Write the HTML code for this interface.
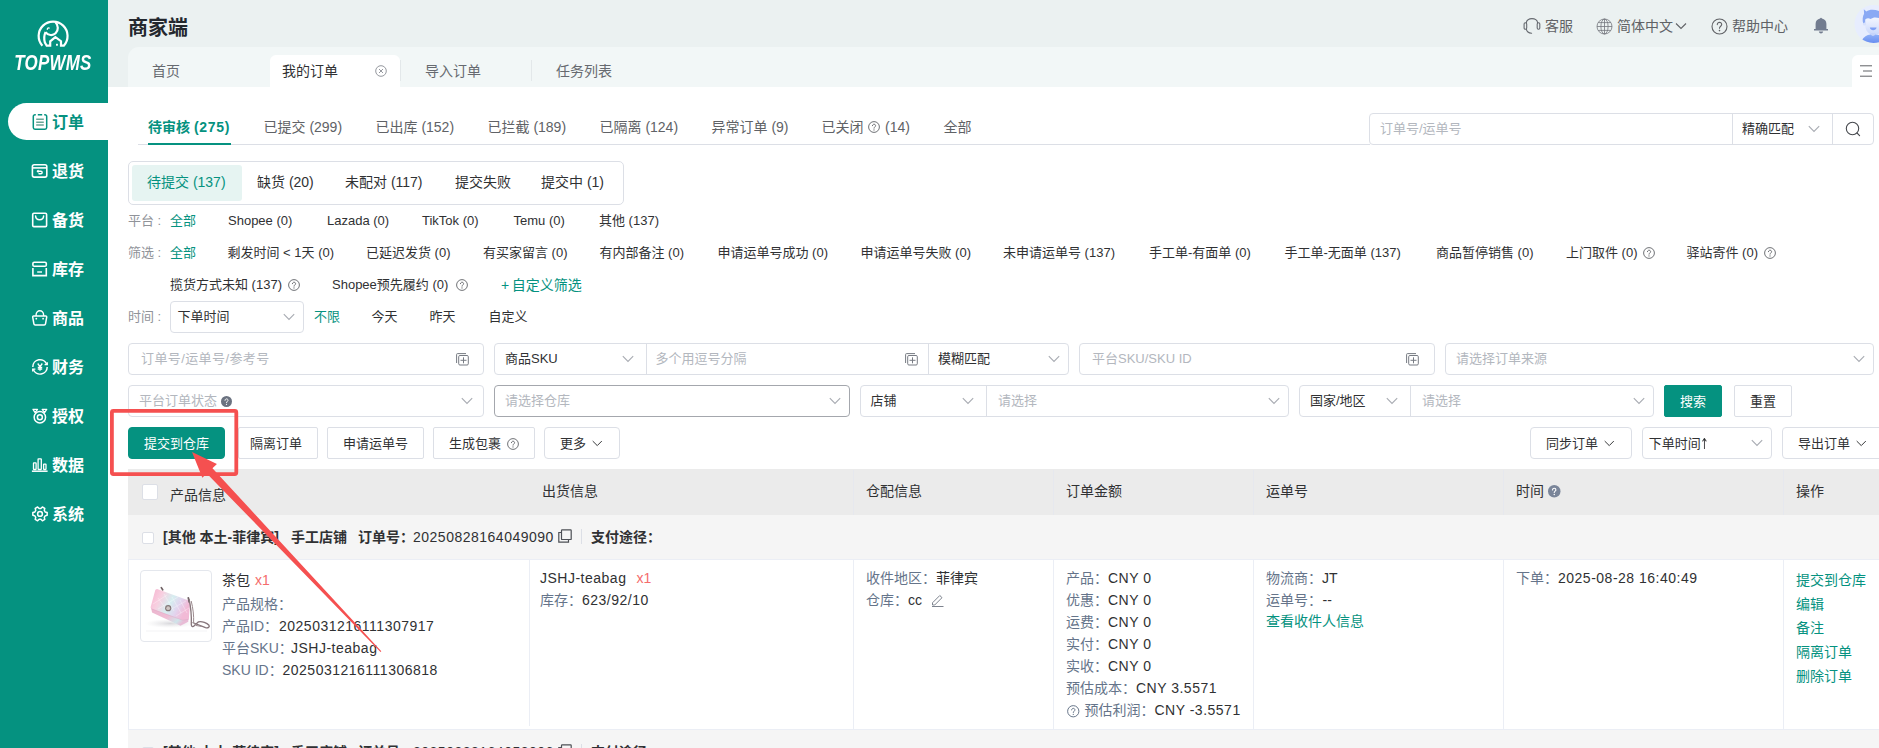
<!DOCTYPE html>
<html lang="zh-CN">
<head>
<meta charset="utf-8">
<title>商家端 - 我的订单</title>
<style>
*{box-sizing:border-box;margin:0;padding:0}
html,body{width:1879px;height:748px;overflow:hidden;background:#fff}
body{position:relative;font-family:"Liberation Sans","Noto Sans CJK SC",sans-serif;font-size:14px;color:#303133;-webkit-font-smoothing:antialiased}
.abs{position:absolute;white-space:nowrap}
.t{position:absolute;white-space:nowrap;height:22px;line-height:22px}
svg{display:block;overflow:visible}
.teal{color:#059280}
.g6{color:#606266}
.lb{color:#65748a}
.red{color:#f56c6c}
.ph{color:#b3b7be}
/* sidebar */
#side{position:absolute;left:0;top:0;width:108px;height:748px;background:#059280}
.mi{position:absolute;left:0;width:108px;height:37px;line-height:37px;color:#fff;font-size:16px;font-weight:700}
.mi span{position:absolute;left:52px;top:0}
.mi svg{position:absolute;left:31.700px;top:10px}
/* header */
#hd{position:absolute;left:108px;top:0;width:1771px;height:47px;background:#ebf1f1}
#tabs{position:absolute;left:108px;top:47px;width:1771px;height:40px;background:#ebf1f1}
#tabs .bar{position:absolute;left:20px;top:0;right:0;height:40px;background:#f2f7f7;border-top-left-radius:11px}
.tab{position:absolute;top:8px;height:32px;line-height:32px;font-size:14px;color:#666a70}
.hitem{position:absolute;top:15px;height:22px;line-height:22px;font-size:14px;color:#606266}
/* inputs */
.box{position:absolute;height:32px;border:1px solid #dcdfe6;background:#fff;border-radius:4px;font-size:13px;line-height:30px}
.box .tx{position:absolute;top:0;white-space:nowrap}
.chev{position:absolute;top:10px}
.btn{position:absolute;height:32px;line-height:30px;border:1px solid #dcdfe6;border-radius:2px;background:#fff;font-size:13px;color:#303133;text-align:left}
.btn.pri{background:#059280;border-color:#059280;color:#fff}
.f13{font-size:13px}
.lbl{color:#909399}
.n{letter-spacing:.5px}
</style>
</head>
<body>
<!-- SIDEBAR -->
<div id="side">
  <svg class="abs" style="left:30px;top:14px" width="48" height="38" viewBox="0 0 48 38" fill="none" stroke="#fff" stroke-width="2.2" stroke-linejoin="miter">
    <path d="M12.4 31.7A14.45 14.45 0 1 1 33.8 31.7H31V27.2L25.4 23.1L20.2 27.3V31.7H16.700L14.900 28.600C14 25.500 14.100 21.200 15.600 18.100"/>
    <path d="M25.500 8.200C28.400 11.200 28.700 16.300 25.600 19.300C22.800 22 18.100 21.600 15.500 18.100"/>
    <path d="M17.300 15.300c.1-1 1-1.600 1.900-1.300" stroke-width="1.300" stroke-linecap="round"/>
    <rect x="26" y="29.800" width="1.900" height="1.900" fill="#fff" stroke="none"/>
  </svg>
  <div class="abs" id="logo" style="left:-1.300px;top:49px;width:108px;height:28px;line-height:28px;text-align:center;color:#fff;font-size:22.5px;font-weight:700;font-style:italic;letter-spacing:.3px;transform:scaleX(.752);transform-origin:53.500px 50%">TOPWMS</div>

  <div class="abs" style="left:8px;top:103px;width:100px;height:37px;background:#fff;border-radius:18.5px 0 0 18.5px"></div>
  <div class="mi" style="top:104px;color:#059280"><svg style="left:31.500px;top:9px" width="16" height="18" viewBox="0 0 16 18" fill="none" stroke="#059280" stroke-width="1.500"><path d="M3.800 1.800H3A1.700 1.700 0 0 0 1.300 3.500V14.500A1.700 1.700 0 0 0 3 16.200H13A1.700 1.700 0 0 0 14.700 14.500V3.500A1.700 1.700 0 0 0 13 1.800H12.200M5.800 1.800H10.200"/><path d="M4.200 6.300h7.600M4.200 9.200h7.600M4.200 12.100h7.600" stroke="#6aa596" stroke-width="1.500"/></svg><span>订单</span></div>
  <div class="mi" style="top:153px"><svg style="left:31px;top:10px" width="17" height="16" viewBox="0 0 17 16" fill="none" stroke="#fff" stroke-width="1.600"><rect x="1.400" y="1.700" width="14.400" height="12.400" rx="1.800"/><path d="M1.400 4.900h14.400"/><path d="M6.600 8.300h3.300c1.700 0 1.700 2.500 0 2.500H8" stroke-linecap="round" stroke-width="1.400"/><path d="M7.300 7.100L5.800 8.300l1.500 1.200z" fill="#fff" stroke-width=".6"/></svg><span>退货</span></div>
  <div class="mi" style="top:202px"><svg style="left:31px;top:10px" width="17" height="16" viewBox="0 0 17 16" fill="none" stroke="#fff" stroke-width="1.600"><rect x="1.700" y="1.200" width="13.900" height="13.400" rx="1.200"/><path d="M4.600 4C4.800 9 12.400 9 12.600 4" stroke-linecap="round" stroke-width="1.500"/></svg><span>备货</span></div>
  <div class="mi" style="top:251px"><svg style="left:31px;top:10px" width="17" height="16" viewBox="0 0 17 16" fill="none" stroke="#fff" stroke-width="1.600"><rect x="1.900" y="1.200" width="13.400" height="4.100" rx="1.300"/><path d="M1.900 7.100V14.600H15.300V7.100"/><path d="M6.200 11h4.800" stroke-width="1.400"/></svg><span>库存</span></div>
  <div class="mi" style="top:300px"><svg style="left:31px;top:8px" width="18" height="18" viewBox="0 0 18 18" fill="none" stroke="#fff" stroke-width="1.500" stroke-linejoin="round"><path d="M2.600 8.100H14.800Q15.900 8.100 15.700 9.200L14.500 15.800Q14.300 16.900 13.200 16.900H4.200Q3.100 16.900 2.900 15.800L1.700 9.200Q1.500 8.100 2.600 8.100Z"/><path d="M5.100 8V7A3.750 4.300 0 0 1 12.600 7V8" stroke-width="1.400"/><circle cx="5.300" cy="10.700" r=".9" fill="#fff" stroke="none"/><circle cx="12.100" cy="10.700" r=".9" fill="#fff" stroke="none"/></svg><span>商品</span></div>
  <div class="mi" style="top:349px"><svg style="left:30.600px;top:9px" width="18" height="18" viewBox="0 0 18 18" fill="none" stroke="#fff" stroke-width="1.500"><path d="M1.800 8.900A7.200 7.200 0 0 1 15.770 6.440"/><path d="M13.600 6.600H16.300V4.200" stroke-width="1.300"/><path d="M16.200 8.900A7.200 7.200 0 0 1 2.230 11.360"/><path d="M4.400 11.200H1.700V13.600" stroke-width="1.300"/><path d="M6.700 5.500L9 8.700 11.300 5.500M9 8.700V12.800M6.800 9.300h4.400M6.800 11h4.400" stroke-width="1.300"/></svg><span>财务</span></div>
  <div class="mi" style="top:398px"><svg style="left:31px;top:10px" width="18" height="16" viewBox="0 0 18 16" fill="none" stroke="#fff" stroke-width="1.500" stroke-linejoin="round"><circle cx="8.850" cy="9.200" r="5.700"/><circle cx="8.850" cy="9.200" r="2.500"/><path d="M2 1.400H6.500L4.100 4.600ZM15.700 1.400H11.200L13.600 4.600Z" stroke-width="1.300"/></svg><span>授权</span></div>
  <div class="mi" style="top:447px"><svg style="left:31px;top:10px" width="18" height="16" viewBox="0 0 18 16" fill="none" stroke="#fff" stroke-width="1.300"><path d="M.9 14.200h15.700" stroke-width="1.500"/><rect x="2.500" y="5.900" width="2.600" height="6.600" rx=".4"/><rect x="7.100" y="1.900" width="3.200" height="10.600" rx=".4"/><rect x="12.600" y="7.100" width="2.400" height="5.400" rx=".4"/></svg><span>数据</span></div>
  <div class="mi" style="top:496px"><svg style="left:30.700px;top:9px" width="18" height="18" viewBox="0 0 18 18" fill="none" stroke="#fff" stroke-width="1.500" stroke-linejoin="round"><path d="M14.13 6.93L16.17 7.51L16.17 10.29L14.13 10.87L13.27 12.36L13.79 14.41L11.38 15.80L9.86 14.33L8.14 14.33L6.62 15.80L4.21 14.41L4.73 12.36L3.87 10.87L1.83 10.29L1.83 7.51L3.87 6.93L4.73 5.44L4.21 3.39L6.62 2.00L8.14 3.47L9.86 3.47L11.38 2.00L13.79 3.39L13.27 5.44Z"/><circle cx="9" cy="8.900" r="2.400"/></svg><span>系统</span></div>
</div>

<!-- HEADER -->
<div id="hd">
  <div class="abs" style="left:20px;top:13px;height:30px;line-height:30px;font-size:20px;font-weight:700;color:#24282e">商家端</div>
  <!-- 客服 -->
  <svg class="abs" style="left:1415px;top:17px" width="18" height="18" viewBox="0 0 18 18" fill="none" stroke="#666a70" stroke-width="1.100" stroke-linecap="round"><path d="M3.300 6C3.300.2 14.600.2 14.600 6"/><rect x="1.100" y="5.800" width="2.600" height="6.400" rx="1.200"/><rect x="14.200" y="5.800" width="2.600" height="6.400" rx="1.200"/><path d="M3.300 12.200C3.700 14.600 5.600 16.100 8.600 16.300"/></svg>
  <div class="hitem" style="left:1437px">客服</div>
  <!-- globe -->
  <svg class="abs" style="left:1488px;top:18px" width="17" height="17" viewBox="0 0 17 17" fill="none" stroke="#73767d" stroke-width=".8"><circle cx="8.500" cy="8.500" r="7.500"/><ellipse cx="8.500" cy="8.500" rx="3.600" ry="7.500"/><path d="M8.500 1v15M1 8.500h15M2.200 4.600h12.600M2.200 12.400h12.600"/></svg>
  <div class="hitem" style="left:1509px">简体中文</div>
  <svg class="abs" style="left:1567px;top:22px" width="12" height="8" viewBox="0 0 12 8" fill="none" stroke="#606266" stroke-width="1.100"><path d="M1 1.500l5 5 5-5"/></svg>
  <!-- help -->
  <svg class="abs" style="left:1603px;top:18px" width="17" height="17" viewBox="0 0 17 17" fill="none" stroke="#606266" stroke-width="1.100"><circle cx="8.500" cy="8.500" r="7.500"/><path d="M6.300 6.600c0-3 4.500-2.900 4.400 0 0 1.600-2.200 1.700-2.200 3.600" stroke-linecap="round"/><circle cx="8.500" cy="12.600" r=".8" fill="#606266" stroke="none"/></svg>
  <div class="hitem" style="left:1624px">帮助中心</div>
  <!-- bell -->
  <svg class="abs" style="left:1705px;top:17px" width="16" height="18" viewBox="0 0 16 18" fill="#727c8f"><path d="M8 .8c.5 0 .8.300.9.800 2.700.500 4.500 2.500 4.500 5.200v5.200h1.600v1.500H1V12h1.600V6.800c0-2.700 1.800-4.700 4.500-5.200.1-.5.400-.8.900-.8z"/><path d="M5.800 14.600h4.400c-.3 1.300-1.100 2-2.200 2s-1.900-.7-2.200-2z"/></svg>
  <!-- avatar -->
  <svg class="abs" style="left:1746px;top:5px;overflow:hidden" width="25" height="40" viewBox="0 0 25 40"><defs><linearGradient id="bd" x1="0" y1="0" x2="0" y2="1"><stop offset="0" stop-color="#8fb0f8"/><stop offset="1" stop-color="#5f86ee"/></linearGradient><linearGradient id="fc" x1="0" y1="0" x2="0" y2="1"><stop offset="0" stop-color="#f3f6ff"/><stop offset="1" stop-color="#c9d7fb"/></linearGradient></defs><clipPath id="avc"><circle cx="19.500" cy="19" r="19"/></clipPath><circle cx="19.500" cy="19" r="19" fill="#e7edfe"/><g clip-path="url(#avc)"><path d="M9.300 19c-1.200-4-.6-8 .8-10.200l-.3-4.600 2.600 2.200C15 4.600 20 4.200 25 6v13z" fill="#8aa9f4"/><path d="M11.200 14.500c2-1.500 3.600-1.600 5.300-.4 2.500-2 5.500-2 8.500-1v15.400c-1.500 1-3 1.400-5 1.400-5 0-8.800-4.400-8.800-10z" fill="url(#fc)"/><circle cx="10.500" cy="19" r="1.600" fill="#d7e1fc"/><path d="M15.800 22.500h6.800c-.4 1.700-1.700 2.700-3.400 2.700s-3-1-3.400-2.700z" fill="#7ea0f5"/><path d="M16.600 28h4.800v4.500h-4.800z" fill="#c6d4fa"/><path d="M7.800 35.200c2-3.300 5-5.300 8.800-5.600 1.500 1.800 3.300 1.800 4.800 0L25 30v10H10z" fill="url(#bd)"/></g></svg>
</div>
<div id="tabs"><div class="bar"></div>
  <div class="tab" style="left:44px">首页</div>
  <div class="abs" style="left:162px;top:8px;width:130px;height:32px;background:#fff;border-radius:6px 6px 0 0"></div>
  <div class="tab" style="left:174px;color:#303133">我的订单</div>
  <svg class="abs" style="left:267px;top:18px" width="12" height="12" viewBox="0 0 12 12" fill="none" stroke="#96999f" stroke-width="1"><circle cx="6" cy="6" r="5.300"/><path d="M4 4l4 4M8 4l-4 4"/></svg>
  <div class="abs" style="left:292px;top:13px;width:1px;height:21px;background:#e3e8ea"></div>
  <div class="tab" style="left:317px">导入订单</div>
  <div class="abs" style="left:423px;top:13px;width:1px;height:21px;background:#e3e8ea"></div>
  <div class="tab" style="left:448px">任务列表</div>
  <div class="abs" style="left:1744px;top:8px;width:27px;height:32px;background:#fff;border-radius:6px 0 0 0"></div>
  <svg class="abs" style="left:1752px;top:18px" width="12" height="12" viewBox="0 0 12 12" fill="none" stroke="#606266" stroke-width="1"><path d="M0 .8h12M3 6h9M0 11.200h12"/></svg>
</div>

<div id="content">
<!-- main tabs -->
<div class="abs" style="left:138px;top:144px;width:1232px;height:1px;background:#dcdfe6"></div>
<div class="abs" style="left:148px;top:143px;width:83px;height:2px;background:#059280"></div>
<div class="t teal" style="left:148px;top:116px;font-weight:700">待审核 <span style="letter-spacing:.7px">(275)</span></div>
<div class="t g6" style="left:263.500px;top:116px">已提交 (299)</div>
<div class="t g6" style="left:375.500px;top:116px">已出库 (152)</div>
<div class="t g6" style="left:487.500px;top:116px">已拦截 (189)</div>
<div class="t g6" style="left:599.500px;top:116px">已隔离 (124)</div>
<div class="t g6" style="left:711.500px;top:116px">异常订单 (9)</div>
<div class="t g6" style="left:821.500px;top:116px">已关闭</div>
<svg class="abs" style="left:867.500px;top:121px" width="12" height="12" viewBox="0 0 12 12" fill="none" stroke="#606266" stroke-width=".9"><circle cx="6" cy="6" r="5.400"/><path d="M4.400 4.700c0-2.100 3.200-2 3.200 0 0 1.100-1.600 1.300-1.600 2.500" stroke-linecap="round"/><circle cx="6" cy="8.900" r=".6" fill="#606266" stroke="none"/></svg>
<div class="t g6" style="left:885px;top:116px">(14)</div>
<div class="t g6" style="left:943.500px;top:116px">全部</div>
<!-- search box top right -->
<div class="box" style="left:1369px;top:113px;width:505px;border-radius:4px"></div>
<div class="abs" style="left:1732px;top:114px;width:1px;height:30px;background:#dcdfe6"></div>
<div class="abs" style="left:1832px;top:114px;width:1px;height:30px;background:#dcdfe6"></div>
<div class="t ph f13" style="left:1380px;top:118px">订单号/运单号</div>
<div class="t f13" style="left:1742px;top:118px">精确匹配</div>
<svg class="abs" style="left:1808px;top:125px" width="12" height="8" viewBox="0 0 12 8" fill="none" stroke="#a8abb2" stroke-width="1.100"><path d="M.8 1.200l5.200 5.200 5.200-5.200"/></svg>
<svg class="abs" style="left:1845px;top:121px" width="16" height="16" viewBox="0 0 16 16" fill="none" stroke="#45484d" stroke-width="1.100" stroke-linecap="round"><circle cx="7.500" cy="7.500" r="6.200"/><path d="M12 12l2.600 2.600"/></svg>
<!-- secondary tabs -->
<div class="abs" style="left:128px;top:161px;width:496px;height:43.500px;border:1px solid #dcdfe6;border-radius:5px"></div>
<div class="abs" style="left:132px;top:165px;width:110px;height:35.700px;background:#e6f4f2;border-radius:3px"></div>
<div class="t teal" style="left:147px;top:171px">待提交 (137)</div>
<div class="t " style="left:257px;top:171px">缺货 (20)</div>
<div class="t " style="left:345px;top:171px">未配对 (117)</div>
<div class="t " style="left:455px;top:171px">提交失败</div>
<div class="t " style="left:541px;top:171px">提交中 (1)</div>
<div class="t f13 lbl" style="left:128px;top:210px">平台<span style="margin-left:3.500px">:</span></div>
<div class="t f13 teal" style="left:170px;top:210px">全部</div>
<div class="t f13" style="left:228px;top:210px">Shopee (0)</div>
<div class="t f13" style="left:327px;top:210px">Lazada (0)</div>
<div class="t f13" style="left:422px;top:210px">TikTok (0)</div>
<div class="t f13" style="left:513.5px;top:210px">Temu (0)</div>
<div class="t f13" style="left:599px;top:210px">其他 (137)</div>
<div class="t f13 lbl" style="left:128px;top:242px">筛选<span style="margin-left:3.500px">:</span></div>
<div class="t f13 teal" style="left:170px;top:242px">全部</div>
<div class="t f13" style="left:227.5px;top:242px">剩发时间 &lt; 1天 (0)</div>
<div class="t f13" style="left:366px;top:242px">已延迟发货 (0)</div>
<div class="t f13" style="left:483px;top:242px">有买家留言 (0)</div>
<div class="t f13" style="left:599.5px;top:242px">有内部备注 (0)</div>
<div class="t f13" style="left:717.5px;top:242px">申请运单号成功 (0)</div>
<div class="t f13" style="left:860.5px;top:242px">申请运单号失败 (0)</div>
<div class="t f13" style="left:1003px;top:242px">未申请运单号 (137)</div>
<div class="t f13" style="left:1149px;top:242px">手工单-有面单 (0)</div>
<div class="t f13" style="left:1284.5px;top:242px">手工单-无面单 (137)</div>
<div class="t f13" style="left:1436px;top:242px">商品暂停销售 (0)</div>
<div class="t f13" style="left:1566px;top:242px">上门取件 (0)</div>
<div class="t f13" style="left:1686.5px;top:242px">驿站寄件 (0)</div>
<svg class="abs" style="left:1643px;top:247px" width="12" height="12" viewBox="0 0 12 12" fill="none" stroke="#606266" stroke-width=".9"><circle cx="6" cy="6" r="5.400"/><path d="M4.400 4.700c0-2.100 3.200-2 3.200 0 0 1.100-1.600 1.300-1.600 2.500" stroke-linecap="round"/><circle cx="6" cy="8.900" r=".6" fill="#606266" stroke="none"/></svg>
<svg class="abs" style="left:1763.5px;top:247px" width="12" height="12" viewBox="0 0 12 12" fill="none" stroke="#606266" stroke-width=".9"><circle cx="6" cy="6" r="5.400"/><path d="M4.400 4.700c0-2.100 3.200-2 3.200 0 0 1.100-1.600 1.300-1.600 2.500" stroke-linecap="round"/><circle cx="6" cy="8.900" r=".6" fill="#606266" stroke="none"/></svg>
<div class="t f13" style="left:170px;top:274px">揽货方式未知 (137)</div>
<svg class="abs" style="left:288px;top:279px" width="12" height="12" viewBox="0 0 12 12" fill="none" stroke="#606266" stroke-width=".9"><circle cx="6" cy="6" r="5.400"/><path d="M4.400 4.700c0-2.100 3.200-2 3.200 0 0 1.100-1.600 1.300-1.600 2.500" stroke-linecap="round"/><circle cx="6" cy="8.900" r=".6" fill="#606266" stroke="none"/></svg>
<div class="t f13" style="left:332px;top:274px">Shopee预先履约 (0)</div>
<svg class="abs" style="left:455.5px;top:279px" width="12" height="12" viewBox="0 0 12 12" fill="none" stroke="#606266" stroke-width=".9"><circle cx="6" cy="6" r="5.400"/><path d="M4.400 4.700c0-2.100 3.200-2 3.200 0 0 1.100-1.600 1.300-1.600 2.500" stroke-linecap="round"/><circle cx="6" cy="8.900" r=".6" fill="#606266" stroke="none"/></svg>
<div class="t teal" style="left:501px;top:274px">+<span style="margin-left:2.500px">自定义筛选</span></div>
<div class="t f13 lbl" style="left:128px;top:306px">时间<span style="margin-left:3.500px">:</span></div>
<div class="box" style="left:170px;top:301px;width:134px"></div>
<div class="t f13" style="left:177.5px;top:306px">下单时间</div>
<svg class="abs" style="left:283px;top:313px" width="12" height="8" viewBox="0 0 12 8" fill="none" stroke="#a8abb2" stroke-width="1.100"><path d="M.8 1.200l5.200 5.200 5.200-5.200"/></svg>
<div class="t f13 teal" style="left:314px;top:306px">不限</div>
<div class="t f13" style="left:371.5px;top:306px">今天</div>
<div class="t f13" style="left:429.5px;top:306px">昨天</div>
<div class="t f13" style="left:488.5px;top:306px">自定义</div>
<!-- search row 1 -->
<div class="box" style="left:128px;top:343px;width:356px;"></div>
<div class="t f13 ph" style="left:141px;top:348px" ><span style="letter-spacing:.4px">订单号/运单号/参考号</span></div>
<svg class="abs" style="left:455.5px;top:352.800px" width="13" height="13" viewBox="0 0 13 13" fill="none" stroke="#777b83" stroke-width="1"><path d="M.6 10V1.500Q.6.600 1.500.600H10"/><rect x="2.700" y="2.500" width="9.600" height="9.500" rx="1.200" fill="#fff"/><path d="M7.500 4.300v6M4.500 7.300h6"/></svg>
<div class="box" style="left:494px;top:343px;width:575px;"></div>
<div class="abs" style="left:646px;top:344px;width:1px;height:30px;background:#dcdfe6"></div>
<div class="t f13" style="left:505px;top:348px">商品SKU</div>
<svg class="abs" style="left:622px;top:355px" width="12" height="8" viewBox="0 0 12 8" fill="none" stroke="#a8abb2" stroke-width="1.100"><path d="M.8 1.200l5.200 5.200 5.200-5.200"/></svg>
<div class="t f13 ph" style="left:655.5px;top:348px">多个用逗号分隔</div>
<svg class="abs" style="left:904.5px;top:352.800px" width="13" height="13" viewBox="0 0 13 13" fill="none" stroke="#777b83" stroke-width="1"><path d="M.6 10V1.500Q.6.600 1.500.600H10"/><rect x="2.700" y="2.500" width="9.600" height="9.500" rx="1.200" fill="#fff"/><path d="M7.500 4.300v6M4.500 7.300h6"/></svg>
<div class="abs" style="left:927.500px;top:344px;width:1px;height:30px;background:#dcdfe6"></div>
<div class="t f13" style="left:938px;top:348px">模糊匹配</div>
<svg class="abs" style="left:1048px;top:355px" width="12" height="8" viewBox="0 0 12 8" fill="none" stroke="#a8abb2" stroke-width="1.100"><path d="M.8 1.200l5.200 5.200 5.200-5.200"/></svg>
<div class="box" style="left:1079px;top:343px;width:356px;"></div>
<div class="t f13 ph" style="left:1092px;top:348px">平台SKU/SKU ID</div>
<svg class="abs" style="left:1406px;top:352.800px" width="13" height="13" viewBox="0 0 13 13" fill="none" stroke="#777b83" stroke-width="1"><path d="M.6 10V1.500Q.6.600 1.500.600H10"/><rect x="2.700" y="2.500" width="9.600" height="9.500" rx="1.200" fill="#fff"/><path d="M7.500 4.300v6M4.500 7.300h6"/></svg>
<div class="box" style="left:1445px;top:343px;width:429px;"></div>
<div class="t f13 ph" style="left:1456px;top:348px">请选择订单来源</div>
<svg class="abs" style="left:1853px;top:355px" width="12" height="8" viewBox="0 0 12 8" fill="none" stroke="#a8abb2" stroke-width="1.100"><path d="M.8 1.200l5.200 5.200 5.200-5.200"/></svg>
<!-- search row 2 -->
<div class="box" style="left:128px;top:385px;width:356px;"></div>
<div class="t f13 ph" style="left:139px;top:390px">平台订单状态</div>
<svg class="abs" style="left:221px;top:396px" width="11" height="11" viewBox="0 0 11 11"><circle cx="5.500" cy="5.500" r="5.500" fill="#6b7280"/><path d="M4 4.300c0-2 3-1.900 3 0 0 1-1.500 1.200-1.500 2.300" fill="none" stroke="#fff" stroke-width="1" stroke-linecap="round"/><circle cx="5.500" cy="8.300" r=".65" fill="#fff"/></svg>
<svg class="abs" style="left:461px;top:397px" width="12" height="8" viewBox="0 0 12 8" fill="none" stroke="#a8abb2" stroke-width="1.100"><path d="M.8 1.200l5.200 5.200 5.200-5.200"/></svg>
<div class="box" style="left:494px;top:385px;width:356px;border-color:#a4a7ad"></div>
<div class="t f13 ph" style="left:505px;top:390px">请选择仓库</div>
<svg class="abs" style="left:829px;top:397px" width="12" height="8" viewBox="0 0 12 8" fill="none" stroke="#a8abb2" stroke-width="1.100"><path d="M.8 1.200l5.200 5.200 5.200-5.200"/></svg>
<div class="box" style="left:860px;top:385px;width:428.5px;"></div>
<div class="abs" style="left:986px;top:386px;width:1px;height:30px;background:#dcdfe6"></div>
<div class="t f13" style="left:870.5px;top:390px">店铺</div>
<svg class="abs" style="left:962px;top:397px" width="12" height="8" viewBox="0 0 12 8" fill="none" stroke="#a8abb2" stroke-width="1.100"><path d="M.8 1.200l5.200 5.200 5.200-5.200"/></svg>
<div class="t f13 ph" style="left:998px;top:390px">请选择</div>
<svg class="abs" style="left:1268px;top:397px" width="12" height="8" viewBox="0 0 12 8" fill="none" stroke="#a8abb2" stroke-width="1.100"><path d="M.8 1.200l5.200 5.200 5.200-5.200"/></svg>
<div class="box" style="left:1299px;top:385px;width:355px;"></div>
<div class="abs" style="left:1409.500px;top:386px;width:1px;height:30px;background:#dcdfe6"></div>
<div class="t f13" style="left:1310px;top:390px">国家/地区</div>
<svg class="abs" style="left:1386px;top:397px" width="12" height="8" viewBox="0 0 12 8" fill="none" stroke="#a8abb2" stroke-width="1.100"><path d="M.8 1.200l5.200 5.200 5.200-5.200"/></svg>
<div class="t f13 ph" style="left:1422px;top:390px">请选择</div>
<svg class="abs" style="left:1633px;top:397px" width="12" height="8" viewBox="0 0 12 8" fill="none" stroke="#a8abb2" stroke-width="1.100"><path d="M.8 1.200l5.200 5.200 5.200-5.200"/></svg>
<div class="btn pri" style="left:1664px;top:385px;width:58px"></div>
<div class="t f13" style="left:1680px;top:391px;color:#fff">搜索</div>
<div class="btn" style="left:1734px;top:385px;width:58px"></div>
<div class="t f13" style="left:1750px;top:391px">重置</div>
<!-- action row -->
<div class="btn pri" style="left:128px;top:427px;width:96.500px;border-radius:4px"></div>
<div class="t f13" style="left:144px;top:432.5px;color:#fff">提交到仓库</div>
<div class="btn" style="left:237.500px;top:427px;width:80px"></div>
<div class="t f13" style="left:250px;top:432.5px">隔离订单</div>
<div class="btn" style="left:327px;top:427px;width:96.500px"></div>
<div class="t f13" style="left:343px;top:432.5px">申请运单号</div>
<div class="btn" style="left:433px;top:427px;width:101.500px"></div>
<div class="t f13" style="left:449px;top:432.5px">生成包裹</div>
<svg class="abs" style="left:506.500px;top:437.500px" width="12" height="12" viewBox="0 0 12 12" fill="none" stroke="#606266" stroke-width=".9"><circle cx="6" cy="6" r="5.400"/><path d="M4.400 4.700c0-2.100 3.200-2 3.200 0 0 1.100-1.600 1.300-1.600 2.500" stroke-linecap="round"/><circle cx="6" cy="8.900" r=".6" fill="#606266" stroke="none"/></svg>
<div class="btn" style="left:544px;top:427px;width:75.500px;border-radius:4px"></div>
<div class="t f13" style="left:560px;top:432.5px">更多</div>
<svg class="abs" style="left:592px;top:440px" width="10.500" height="7" viewBox="0 0 12 8" fill="none" stroke="#303133" stroke-width="1.100"><path d="M.8 1.200l5.200 5.200 5.200-5.200"/></svg>
<div class="btn" style="left:1530px;top:427px;width:101.500px;border-radius:4px"></div>
<div class="t f13" style="left:1546px;top:432.5px">同步订单</div>
<svg class="abs" style="left:1604px;top:440px" width="10.500" height="7" viewBox="0 0 12 8" fill="none" stroke="#303133" stroke-width="1.100"><path d="M.8 1.200l5.200 5.200 5.200-5.200"/></svg>
<div class="box" style="left:1642px;top:427px;width:129.5px;"></div>
<div class="t f13" style="left:1648.8px;top:432.0px">下单时间<span style="font-family:'DejaVu Sans',sans-serif;font-size:15px;margin-left:-1px;position:relative;top:.7px;display:inline-block;transform:scaleX(.7);transform-origin:0 50%">↑</span></div>
<svg class="abs" style="left:1751px;top:439px" width="12" height="8" viewBox="0 0 12 8" fill="none" stroke="#a8abb2" stroke-width="1.100"><path d="M.8 1.200l5.200 5.200 5.200-5.200"/></svg>
<div class="btn" style="left:1782px;top:427px;width:110px;border-radius:4px"></div>
<div class="t f13" style="left:1798px;top:432.5px">导出订单</div>
<svg class="abs" style="left:1856px;top:440px" width="10.500" height="7" viewBox="0 0 12 8" fill="none" stroke="#303133" stroke-width="1.100"><path d="M.8 1.200l5.200 5.200 5.200-5.200"/></svg>
<!-- table -->
<div class="abs" style="left:128px;top:469.200px;width:1751px;height:46px;background:#ebebeb"></div>
<div class="abs" style="left:853px;top:469.500px;width:1px;height:45px;background:#e6e8ee"></div>
<div class="abs" style="left:1053px;top:469.500px;width:1px;height:45px;background:#e6e8ee"></div>
<div class="abs" style="left:1253px;top:469.500px;width:1px;height:45px;background:#e6e8ee"></div>
<div class="abs" style="left:1503px;top:469.500px;width:1px;height:45px;background:#e6e8ee"></div>
<div class="abs" style="left:1783px;top:469.500px;width:1px;height:45px;background:#e6e8ee"></div>
<div class="abs" style="left:142px;top:484px;width:16px;height:16px;background:#fff;border:1px solid #dcdfe6;border-radius:2px"></div>
<div class="t " style="left:170px;top:484px">产品信息</div>
<div class="t " style="left:542px;top:479.5px">出货信息</div>
<div class="t " style="left:866px;top:479.5px">仓配信息</div>
<div class="t " style="left:1066px;top:479.5px">订单金额</div>
<div class="t " style="left:1266px;top:479.5px">运单号</div>
<div class="t " style="left:1516px;top:479.5px">时间</div>
<div class="t " style="left:1796px;top:479.5px">操作</div>
<svg class="abs" style="left:1548px;top:484.600px" width="12.500" height="12.500" viewBox="0 0 12 12"><circle cx="6" cy="6" r="6" fill="#7a8599"/><path d="M4.400 4.700c0-2.100 3.200-2 3.200 0 0 1.100-1.600 1.300-1.600 2.500" fill="none" stroke="#fff" stroke-width="1.100" stroke-linecap="round"/><circle cx="6" cy="9.100" r=".7" fill="#fff"/></svg>
<div class="abs" style="left:128px;top:514.500px;width:1751px;height:45px;background:#f5f5f5"></div>
<div class="abs" style="left:141.500px;top:531.500px;width:12.500px;height:12.500px;background:#fff;border:1px solid #dcdfe6;border-radius:2px"></div>
<div class="t " style="left:163px;top:525.5px;font-weight:700">[其他 本土-菲律宾]</div>
<div class="t " style="left:291px;top:525.5px;font-weight:700">手工店铺</div>
<div class="t " style="left:358px;top:525.5px;font-weight:700">订单号：</div>
<div class="t n" style="left:413px;top:525.5px">20250828164049090</div>
<svg class="abs" style="left:558px;top:528.500px" width="14" height="14" viewBox="0 0 14 14" fill="none" stroke="#4d5056" stroke-width="1.200"><rect x="3.500" y=".8" width="9.700" height="9.700" rx=".6"/><path d="M3.500 3.500H.8v9.700h9.700v-2.700"/></svg>
<div class="abs" style="left:581px;top:529px;width:1px;height:15px;background:#dcdfe6"></div>
<div class="t " style="left:591px;top:525.5px;font-weight:700">支付途径：</div>
<div class="abs" style="left:128px;top:559px;width:1751px;height:170.500px;background:#fff;border-left:1px solid #ebeef5;border-bottom:1px solid #ebeef5;border-top:1px solid #ebeef5"></div>
<div class="abs" style="left:529px;top:559.500px;width:1px;height:166px;background:#ebeef5"></div>
<div class="abs" style="left:853px;top:559.500px;width:1px;height:170px;background:#ebeef5"></div>
<div class="abs" style="left:1053px;top:559.500px;width:1px;height:170px;background:#ebeef5"></div>
<div class="abs" style="left:1253px;top:559.500px;width:1px;height:170px;background:#ebeef5"></div>
<div class="abs" style="left:1503px;top:559.500px;width:1px;height:170px;background:#ebeef5"></div>
<div class="abs" style="left:1783px;top:559.500px;width:1px;height:170px;background:#ebeef5"></div>
<div class="abs" style="left:140px;top:570px;width:71.500px;height:71.500px;border:1px solid #e4e7ed;border-radius:4px;background:#fff"></div>
<svg class="abs" style="left:136px;top:566px" width="80" height="80" viewBox="0 0 80 80">
<defs>
<linearGradient id="bg1" x1="0" y1="0" x2="1" y2=".4"><stop offset="0" stop-color="#f6b3cf"/><stop offset=".3" stop-color="#f8cfe0"/><stop offset=".58" stop-color="#d6eef0"/><stop offset=".8" stop-color="#e2d4ee"/><stop offset="1" stop-color="#f2bad6"/></linearGradient>
<linearGradient id="bg2" x1="0" y1="0" x2="1" y2=".5"><stop offset="0" stop-color="#eab5cd"/><stop offset=".55" stop-color="#f0bdd5"/><stop offset=".85" stop-color="#cfe5ea"/><stop offset="1" stop-color="#e9bcd6"/></linearGradient>
<radialGradient id="sh" cx=".5" cy=".5" r=".5"><stop offset="0" stop-color="#d4d4d8" stop-opacity=".9"/><stop offset="1" stop-color="#e8e8ea" stop-opacity="0"/></radialGradient>
<filter id="bl" x="-10%" y="-10%" width="120%" height="120%"><feGaussianBlur stdDeviation=".5"/></filter>
</defs>
<ellipse cx="34" cy="57.500" rx="25" ry="4.500" fill="url(#sh)"/>
<path d="M10 65h61" stroke="#f0f0f2" stroke-width=".8"/>
<g filter="url(#bl)">
<path d="M15 41L16 46.500 44.500 59.800 52.300 55.800 53 44z" fill="url(#bg2)"/>
<path d="M19.300 24.100Q20.500 22.600 22.500 23.400L52.800 34.600Q54.300 35.400 54 37.200L52.800 53.200 46.500 54 15.200 42.600Q14.300 41.800 14.800 40.500z" fill="url(#bg1)"/>
<path d="M22 32l8 11M28 28l10 17M36 31l9 16M44 34l7 13M17 38l14-9M22 43l20-12M30 46l20-11M40 50l13-8" stroke="#fff" stroke-opacity=".4" stroke-width=".8" fill="none"/>
<path d="M15.300 42.800L46.500 54.200 52.800 53.300" stroke="#dba4c0" stroke-opacity=".6" stroke-width=".7" fill="none"/>
<circle cx="32.200" cy="42.200" r="3.100" fill="#857778"/><circle cx="32.200" cy="42.200" r="1.900" fill="#cfc6c3"/>
<path d="M25.300 21.600l1.400 2.200M52.300 31.800L53.200 36" stroke="#6f6064" stroke-width="1.700" stroke-linecap="round"/>
<path d="M53 33C54.600 40 55.600 50 55.300 58.500C55.300 61 57 61 58.500 59.500L62.500 55.800C66 55 71 57 73 59.200C74 61.200 72 62.200 69.500 61.600L56.500 56.500" stroke="#86757a" stroke-width="1.300" fill="none" stroke-linejoin="round"/>
<path d="M55.200 35C57 42 58 50 57.600 56.500L60 59.500 66 60.500" stroke="#9b8a8e" stroke-width="1" fill="none"/>
</g>
</svg>
<div class="t " style="left:222px;top:569.2px">茶包</div>
<div class="t red" style="left:255px;top:569.2px">x1</div>
<div class="t lb" style="left:222px;top:593.2px">产品规格：</div>
<div class="t lb" style="left:222px;top:615.2px">产品ID：</div>
<div class="t n" style="left:279px;top:615.2px">2025031216111307917</div>
<div class="t lb" style="left:222px;top:637.2px">平台SKU：</div>
<div class="t n" style="left:291px;top:637.2px">JSHJ-teabag</div>
<div class="t lb" style="left:222px;top:659.2px">SKU ID：</div>
<div class="t n" style="left:282.5px;top:659.2px">2025031216111306818</div>
<div class="t n" style="left:540px;top:566.7px">JSHJ-teabag</div>
<div class="t red" style="left:636.5px;top:566.7px">x1</div>
<div class="t lb" style="left:540px;top:588.7px">库存：</div>
<div class="t n" style="left:582px;top:588.7px">623/92/10</div>
<div class="t lb" style="left:866px;top:566.7px">收件地区：</div>
<div class="t " style="left:936px;top:566.7px">菲律宾</div>
<div class="t lb" style="left:866px;top:588.7px">仓库：</div>
<div class="t " style="left:908px;top:588.7px">cc</div>
<svg class="abs" style="left:931px;top:594px" width="13" height="13" viewBox="0 0 13 13" fill="none" stroke="#7d838e" stroke-width="1"><path d="M1.500 8.800L8.800 1.500l2.200 2.200L3.700 11H1.500z" stroke-linejoin="round"/><path d="M1 12.500h11.500"/></svg>
<div class="t lb" style="left:1066px;top:566.7px">产品：</div>
<div class="t n" style="left:1108px;top:566.7px">CNY 0</div>
<div class="t lb" style="left:1066px;top:588.7px">优惠：</div>
<div class="t n" style="left:1108px;top:588.7px">CNY 0</div>
<div class="t lb" style="left:1066px;top:610.7px">运费：</div>
<div class="t n" style="left:1108px;top:610.7px">CNY 0</div>
<div class="t lb" style="left:1066px;top:632.7px">实付：</div>
<div class="t n" style="left:1108px;top:632.7px">CNY 0</div>
<div class="t lb" style="left:1066px;top:654.7px">实收：</div>
<div class="t n" style="left:1108px;top:654.7px">CNY 0</div>
<div class="t lb" style="left:1066px;top:676.7px">预估成本：</div>
<div class="t n" style="left:1136px;top:676.7px">CNY 3.5571</div>
<svg class="abs" style="left:1066.500px;top:704.5px" width="12.500" height="12.500" viewBox="0 0 12 12" fill="none" stroke="#5e6d82" stroke-width=".9"><circle cx="6" cy="6" r="5.400"/><path d="M4.400 4.700c0-2.100 3.200-2 3.200 0 0 1.100-1.600 1.300-1.600 2.500" stroke-linecap="round"/><circle cx="6" cy="8.900" r=".6" fill="#5e6d82" stroke="none"/></svg>
<div class="t lb" style="left:1084.5px;top:698.7px">预估利润：</div>
<div class="t n" style="left:1154.5px;top:698.7px">CNY -3.5571</div>
<div class="t lb" style="left:1266px;top:566.7px">物流商：</div>
<div class="t " style="left:1322px;top:566.7px">JT</div>
<div class="t lb" style="left:1266px;top:588.7px">运单号：</div>
<div class="t " style="left:1322.5px;top:588.7px">--</div>
<div class="t teal" style="left:1266px;top:610.2px">查看收件人信息</div>
<div class="t lb" style="left:1516px;top:566.7px">下单：</div>
<div class="t n" style="left:1558px;top:566.7px">2025-08-28 16:40:49</div>
<div class="t teal" style="left:1796px;top:569px">提交到仓库</div>
<div class="t teal" style="left:1796px;top:593px">编辑</div>
<div class="t teal" style="left:1796px;top:617px">备注</div>
<div class="t teal" style="left:1796px;top:641px">隔离订单</div>
<div class="t teal" style="left:1796px;top:665px">删除订单</div>
<div class="abs" style="left:128px;top:729.500px;width:1751px;height:45px;background:#f5f5f5"></div>
<div class="abs" style="left:141.500px;top:746.500px;width:12.500px;height:12.500px;background:#fff;border:1px solid #dcdfe6;border-radius:2px"></div>
<div class="t " style="left:163px;top:740.5px;font-weight:700">[其他 本土-菲律宾]</div>
<div class="t " style="left:291px;top:740.5px;font-weight:700">手工店铺</div>
<div class="t " style="left:358px;top:740.5px;font-weight:700">订单号：</div>
<div class="t n" style="left:413px;top:740.5px">20250828164053006</div>
<svg class="abs" style="left:558px;top:743.500px" width="14" height="14" viewBox="0 0 14 14" fill="none" stroke="#4d5056" stroke-width="1.200"><rect x="3.500" y=".8" width="9.700" height="9.700" rx=".6"/><path d="M3.500 3.500H.8v9.700h9.700v-2.700"/></svg>
<div class="abs" style="left:581px;top:744px;width:1px;height:15px;background:#dcdfe6"></div>
<div class="t " style="left:591px;top:740.5px;font-weight:700">支付途径：</div>
<!-- annotation -->
<svg class="abs" style="left:0;top:0;pointer-events:none" width="1879" height="748" viewBox="0 0 1879 748">
<rect x="111.900" y="410.900" width="124.400" height="63.200" rx="1.500" fill="none" stroke="#f55050" stroke-width="3.800"/>
<path d="M192 452L216.930 464.020 212.470 468.190 381.300 651.200 380.500 651.900 206.770 473.510 202.320 477.680z" fill="#f55050"/>
</svg>
<!--SECTION5-->
</div>

</body>
</html>
